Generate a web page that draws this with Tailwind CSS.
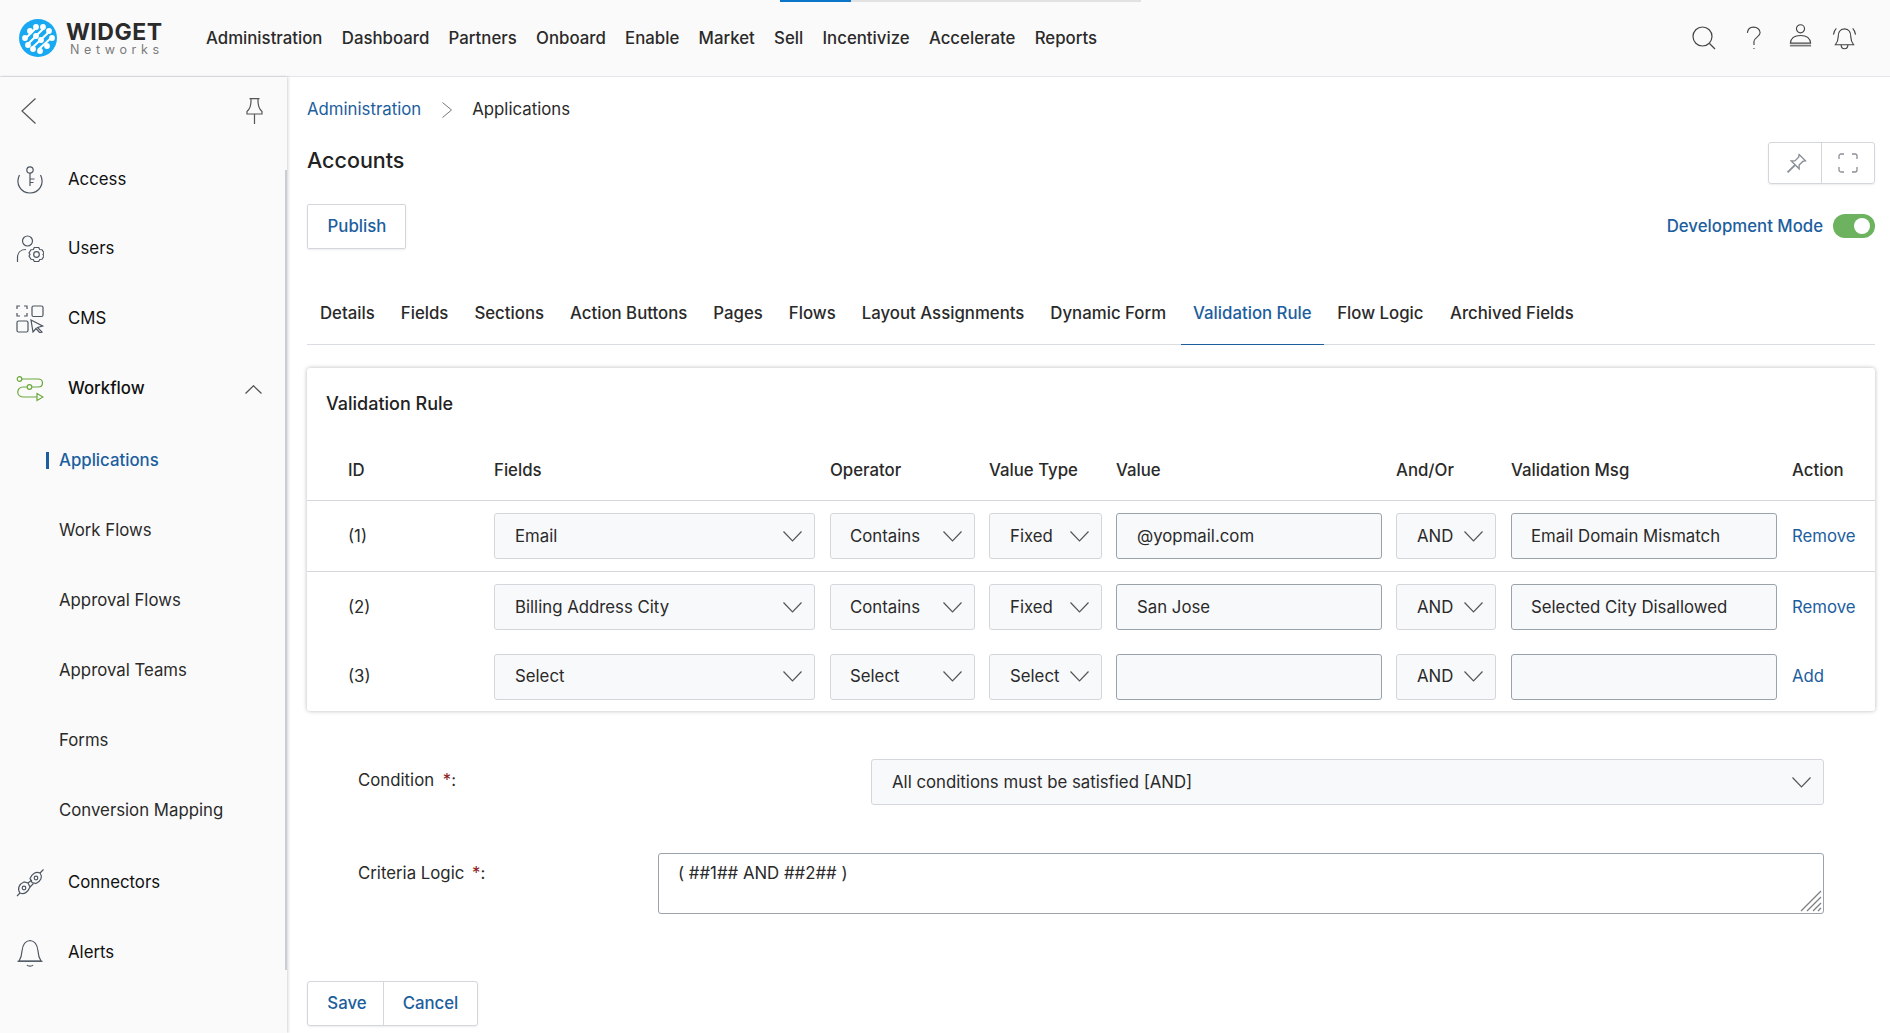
<!DOCTYPE html>
<html lang="en">
<head>
  <meta charset="UTF-8">
  <title>Accounts · Validation Rule</title>
  <script src="https://cdn.jsdelivr.net/npm/@tailwindcss/browser@4"></script>
</head>
<body class="h-[1033px] w-[1890px] overflow-hidden bg-white font-['Inter',sans-serif] text-[16.8px] text-[#2a2a2a]">

  <!-- TOP NAV -->
  <header class="relative flex h-[77px] items-center border-b border-[#e3e6ea] bg-[#fafafa]">
    <div class="absolute left-[780px] top-0 h-[2px] w-[361px] bg-[#e2e2e2]"></div>
    <div class="absolute left-[780px] top-0 h-[2px] w-[71px] bg-[#0b76c9]"></div>

    <svg class="ml-[19px] h-[38px] w-[38px] shrink-0" viewBox="0 0 38 38">
      <circle cx="19" cy="19" r="19" fill="#19a9f2"/>
      <g stroke="#fff" stroke-width="2" fill="#fff" stroke-linecap="round">
        <path d="M7 19 L17 9 M9 25 L24 10 M14 28 L30 13 M20 30 L32 19" fill="none"/>
        <circle cx="17" cy="8" r="1.900"/><circle cx="24" cy="8" r="1.900"/><circle cx="11" cy="12" r="1.900"/>
        <circle cx="30" cy="12" r="1.900"/><circle cx="6" cy="19" r="1.900"/><circle cx="33" cy="19" r="1.900"/>
        <circle cx="9" cy="26" r="1.900"/><circle cx="28" cy="27" r="1.900"/><circle cx="14" cy="30" r="1.900"/><circle cx="21" cy="32" r="1.900"/>
        <circle cx="17" cy="17" r="1.900"/><circle cx="22" cy="21" r="1.900"/>
      </g>
    </svg>
    <div class="ml-[9px] mt-[2px] flex w-[100px] shrink-0 flex-col">
      <div class="h-[21px] text-[23px] font-bold leading-[21px] tracking-[0.5px] text-[#2b2b2b]">WIDGET</div>
      <div class="ml-[4px] h-[14px] whitespace-nowrap text-[12.5px] leading-[14px] tracking-[4.600px] text-[#7b7b7b]">Networks</div>
    </div>

    <nav class="ml-[40px] mt-[2px] flex gap-[19.300px] font-medium text-[#2a2a2a]">
      <a>Administration</a><a>Dashboard</a><a>Partners</a><a>Onboard</a><a>Enable</a><a>Market</a><a>Sell</a><a>Incentivize</a><a>Accelerate</a><a>Reports</a>
    </nav>

    <div class="ml-auto mr-[33px] flex items-center text-[#444]">
      <svg class="h-[24px] w-[24px]" viewBox="0 0 24 24" fill="none" stroke="currentColor" stroke-width="1.200"><circle cx="10.500" cy="10.500" r="9.500"/><path d="M17.500 17.500 L23 23"/></svg>
      <svg class="ml-[29px] h-[25px] w-[17px]" viewBox="0 0 18 26" fill="none" stroke="currentColor" stroke-width="1.200"><path d="M2.500 7 C3 3 6 1 9 1 C13 1 16 3.500 16 7 C16 11 10 12 9.500 16 L9.500 20"/><path d="M9.500 23 V25" stroke-dasharray="1 1"/></svg>
      <svg class="ml-[26px] h-[25px] w-[25px] -translate-y-[3px]" viewBox="0 0 26 26" fill="none" stroke="currentColor" stroke-width="1.200"><circle cx="13" cy="6" r="4.200"/><path d="M2.500 21 C3 15 8 13 13 13 C18 13 23 15 23.500 21 Z"/><path d="M2 23.500 H24" stroke-width="1.800" stroke="#777"/></svg>
      <svg class="ml-[19px] h-[25px] w-[25px]" viewBox="0 0 26 26" fill="none" stroke="currentColor" stroke-width="1.200"><path d="M13 3 C8 3 6.500 7 6.500 11 C6.500 15 5.500 17 3.500 19.500 H22.500 C20.500 17 19.500 15 19.500 11 C19.500 7 18 3 13 3 Z"/><path d="M9.500 19.500 C9.500 25 16.500 25 16.500 19.500"/><path d="M1.500 9 C2 6 3 4 4.500 2.500 M24.500 9 C24 6 23 4 21.500 2.500"/></svg>
    </div>
  </header>

  <div class="flex h-[956px]">
    <!-- SIDEBAR -->
    <aside class="relative w-[287px] shrink-0 bg-[#fafafa] shadow-[1px_0_3px_rgba(0,0,0,0.18)]">
      <div class="absolute right-0 top-[93px] h-[800px] w-[2px] bg-[#c9ced4]"></div>
      <div class="flex h-[68px] items-start justify-between pl-[21px] pr-[24px] pt-[21px]">
        <svg class="h-[26px] w-[15px]" viewBox="0 0 15 26" fill="none" stroke="#555" stroke-width="1.200"><path d="M14.500 .5 L1 13 L14.500 25.500"/></svg>
        <svg class="h-[26px] w-[17px]" viewBox="0 0 17 26" fill="none" stroke="#555" stroke-width="1.200"><path d="M3.500 .6 H13.500 M5 .6 V3 C5 7 4 11 1 13.500 V16 H16 V13.500 C13 11 12 7 12 3 V.6 M8.500 16 V26"/></svg>
      </div>

      <div class="flex h-[69px] items-center pl-[16px]">
        <svg class="h-[28px] w-[28px] shrink-0 text-[#4d5661]" viewBox="0 0 28 28" fill="none" stroke="currentColor" stroke-width="1.200"><circle cx="14" cy="4" r="3.200"/><path d="M14 7 V20 M14 13 H18.500 M14 16.500 H17.500"/><path d="M3.500 9 C-1 18 5 27 14 27 C23 27 29 18 24.500 9"/></svg>
        <span class="ml-[24px] text-[#111]">Access</span>
      </div>
      <div class="flex h-[70px] items-center pl-[16px]">
        <svg class="h-[28px] w-[28px] shrink-0 text-[#4d5661]" viewBox="0 0 28 28" fill="none" stroke="currentColor" stroke-width="1.200"><circle cx="11.500" cy="6" r="5"/><path d="M1.500 27 V22.500 C1.500 17.500 5 14.500 10 14.500"/><circle cx="20.500" cy="19.500" r="2.800"/><path d="M18.300 12.500 H22.700 L23.700 14.500 L26 14.700 L28 18 L27 19.500 L28 21 L26 24.300 L23.700 24.500 L22.700 26.500 H18.300 L17.300 24.500 L15 24.300 L13 21 L14 19.500 L13 18 L15 14.700 L17.300 14.500 Z"/></svg>
        <span class="ml-[24px] text-[#111]">Users</span>
      </div>
      <div class="flex h-[70px] items-center pl-[16px]">
        <svg class="h-[28px] w-[28px] shrink-0 text-[#4d5661]" viewBox="0 0 28 28" fill="none" stroke="currentColor" stroke-width="1.200"><path d="M1 4 V1 H4 M8 1 H11 V4 M11 8 V11 H8 M4 11 H1 V8"/><rect x="16" y="1" width="11" height="10.500" rx="1.500"/><rect x="1" y="16" width="11" height="11" rx="1.500"/><path d="M15 15 L26.500 21 L21.500 22.500 L26 27 L24 28 L20 23.500 L17 27 Z"/></svg>
        <span class="ml-[24px] text-[#111]">CMS</span>
      </div>
      <div class="mb-[2px] flex h-[70px] items-center pl-[16px] pr-[25px]">
        <svg class="h-[28px] w-[28px] shrink-0 text-[#6aa83a]" viewBox="0 0 28 28" fill="none" stroke="currentColor" stroke-width="1.200"><circle cx="3.500" cy="4" r="2.300"/><path d="M6 4 H22 C28 4 28 12 22 12 H16 M11 12 H7 C0 12 0 22 7 22 H21"/><circle cx="13.500" cy="12" r="2.300"/><path d="M21 18.500 L27 22 L21 25.500 Z"/></svg>
        <span class="ml-[24px] font-medium text-[#111]">Workflow</span>
        <svg class="ml-auto h-[9px] w-[17px]" viewBox="0 0 17 9" fill="none" stroke="#555" stroke-width="1.300"><path d="M.5 8.500 L8.500 .8 L16.500 8.500"/></svg>
      </div>

      <div class="relative flex h-[70px] items-center pl-[59px] font-medium text-[#1c5e9e]">
        <span class="absolute left-[46px] top-[26px] h-[17px] w-[3px] bg-[#1c5e9e]"></span>Applications
      </div>
      <div class="flex h-[70px] items-center pl-[59px]">Work Flows</div>
      <div class="flex h-[70px] items-center pl-[59px]">Approval Flows</div>
      <div class="flex h-[70px] items-center pl-[59px]">Approval Teams</div>
      <div class="flex h-[70px] items-center pl-[59px]">Forms</div>
      <div class="flex h-[70px] items-center pl-[59px]">Conversion Mapping</div>

      <div class="mt-[2px] flex h-[70px] items-center pl-[16px]">
        <svg class="h-[28px] w-[28px] shrink-0 text-[#4d5661]" viewBox="0 0 28 28" fill="none" stroke="currentColor" stroke-width="1.200"><path d="M1 27 L4 24 M24 4 L27.500 .5"/><path d="M4 24 C1 20 3 15 8 13 L12 14 L14 18 C12 23 8 26 4 24 Z"/><path d="M24 4 C27 8 25 12 20 14.500 L16 13.500 L14 9.500 C16 5 20 2 24 4 Z"/><circle cx="8" cy="19" r="1.800"/><circle cx="20" cy="9" r="1.800"/><path d="M12 14 L16 11 M14 18 L17.500 14.500"/></svg>
        <span class="ml-[24px] text-[#111]">Connectors</span>
      </div>
      <div class="flex h-[70px] items-center pl-[16px]">
        <svg class="h-[28px] w-[28px] shrink-0 text-[#4d5661]" viewBox="0 0 28 28" fill="none" stroke="currentColor" stroke-width="1.200"><path d="M14 1.500 C8 2 6.500 7 6 12 C5.800 16 5 19 3 22 H25 C23 19 22.200 16 22 12 C21.500 7 20 2 14 1.500 Z"/><path d="M1.500 22.300 H26.500"/><path d="M11 26 C12 27.500 16 27.500 17 26"/></svg>
        <span class="ml-[24px] text-[#111]">Alerts</span>
      </div>
    </aside>

    <!-- MAIN -->
    <main class="relative flex-1 pl-[20px] pr-[15px]">
      <!-- breadcrumb -->
      <div class="flex h-[65px] items-center">
        <a class="text-[#1c5e9e]">Administration</a>
        <svg class="ml-[21px] h-[16px] w-[10px]" viewBox="0 0 10 16" fill="none" stroke="#777" stroke-width="1"><path d="M.5 .5 L9.500 8 L.5 15.500"/></svg>
        <span class="ml-[20px]">Applications</span>
      </div>

      <div class="flex h-[42px] items-center justify-between">
        <h1 class="mb-[5px] text-[21.500px] font-medium text-[#222]">Accounts</h1>
        <div class="flex h-[42px] w-[107px] rounded-[3px] border border-[#d3d7dc] shadow-[0_1px_2px_rgba(0,0,0,0.08)]">
          <div class="flex w-[53px] items-center justify-center border-r border-[#d3d7dc] pl-[3px]">
            <svg class="h-[21px] w-[21px]" viewBox="0 0 20 20" fill="none" stroke="#8a9097" stroke-width="1.300"><path d="M12.500 1.500 L18.500 7.500 L16 8 L12.500 11.500 L12.500 15 L5 7.500 L8.500 7.500 L12 4 Z"/><path d="M8.500 11.500 L1.500 18.500" stroke-width="1.800"/></svg>
          </div>
          <div class="flex flex-1 items-center justify-center">
            <svg class="h-[20px] w-[20px]" viewBox="0 0 20 20" fill="none" stroke="#8a9097" stroke-width="1.300"><path d="M1 6 V3 C1 2 2 1 3 1 H6 M14 1 H17 C18 1 19 2 19 3 V6 M19 14 V17 C19 18 18 19 17 19 H14 M6 19 H3 C2 19 1 18 1 17 V14"/></svg>
          </div>
        </div>
      </div>

      <div class="mt-[20px] flex h-[44px] items-center justify-between">
        <button class="h-[45px] w-[99px] rounded-[2px] border border-[#d3d7dc] pl-[1px] pt-[1px] font-medium text-[#1c5e9e] shadow-[0_1px_2px_rgba(0,0,0,0.08)]">Publish</button>
        <div class="flex items-center">
          <span class="translate-y-px font-medium text-[#1c5e9e]">Development Mode</span>
          <span class="relative ml-[10px] block h-[24px] w-[42px] rounded-full bg-[#6db35f]"><span class="absolute right-[5px] top-[4px] h-[16px] w-[16px] rounded-full bg-white"></span></span>
        </div>
      </div>

      <!-- tabs -->
      <div class="mt-[44px] flex h-[53px] border-b border-[#d9dce0] font-medium">
        <a class="flex items-center px-[13px] pb-[9px]">Details</a>
        <a class="flex items-center px-[13px] pb-[9px]">Fields</a>
        <a class="flex items-center px-[13px] pb-[9px]">Sections</a>
        <a class="flex items-center px-[13px] pb-[9px]">Action Buttons</a>
        <a class="flex items-center px-[13px] pb-[9px]">Pages</a>
        <a class="flex items-center px-[13px] pb-[9px]">Flows</a>
        <a class="flex items-center px-[13px] pb-[9px]">Layout Assignments</a>
        <a class="flex items-center px-[13px] pb-[9px]">Dynamic Form</a>
        <a class="-mb-px ml-[2px] flex items-center border-b border-[#1c5e9e] px-[12px] pb-[9px] text-[#1c5e9e]">Validation Rule</a>
        <a class="flex items-center px-[13.500px] pb-[9px]">Flow Logic</a>
        <a class="flex items-center px-[13px] pb-[9px]">Archived Fields</a>
      </div>

      <!-- card -->
      <section class="mt-[23px] h-[343px] rounded-[3px] bg-white shadow-[0_0_4px_rgba(0,0,0,0.28)]">
        <h2 class="flex h-[72px] items-center pb-[1px] pl-[19px] text-[18px] font-medium text-[#222]">Validation Rule</h2>

        <div class="grid h-[61px] grid-cols-[187px_336px_159px_127px_280px_115px_281px_1fr] items-center border-b border-[#d5d8dd] pt-[2px] font-medium">
          <span class="pl-[41px]">ID</span><span>Fields</span><span>Operator</span><span>Value Type</span><span>Value</span><span>And/Or</span><span>Validation Msg</span><span>Action</span>
        </div>

        <!-- row 1 -->
        <div class="grid h-[71px] grid-cols-[187px_336px_159px_127px_280px_115px_281px_1fr] items-center border-b border-[#d5d8dd] [&_a]:translate-y-px [&_span]:translate-y-px">
          <span class="pl-[41px]">(1)</span>
          <div class="flex h-[46px] w-[321px] items-center justify-between rounded-[3px] border border-[#d3d7dc] bg-[#f8f9fb] pl-[20px] pr-[12px]"><span>Email</span><svg class="h-[11px] w-[19px]" viewBox="0 0 19 11" fill="none" stroke="#555" stroke-width="1.200"><path d="M.5 .5 L9.500 10 L18.500 .5"/></svg></div>
          <div class="flex h-[46px] w-[145px] items-center justify-between rounded-[3px] border border-[#d3d7dc] bg-[#f8f9fb] pl-[19px] pr-[12px]"><span>Contains</span><svg class="h-[11px] w-[19px]" viewBox="0 0 19 11" fill="none" stroke="#555" stroke-width="1.200"><path d="M.5 .5 L9.500 10 L18.500 .5"/></svg></div>
          <div class="flex h-[46px] w-[113px] items-center justify-between rounded-[3px] border border-[#d3d7dc] bg-[#f8f9fb] pl-[20px] pr-[12px]"><span>Fixed</span><svg class="h-[11px] w-[19px]" viewBox="0 0 19 11" fill="none" stroke="#555" stroke-width="1.200"><path d="M.5 .5 L9.500 10 L18.500 .5"/></svg></div>
          <div class="flex h-[46px] w-[266px] items-center rounded-[3px] border border-[#9aa3ab] bg-[#f8f9fb] pl-[20px]"><span>@yopmail.com</span></div>
          <div class="flex h-[46px] w-[100px] items-center justify-between rounded-[3px] border border-[#d3d7dc] bg-[#f8f9fb] pl-[20px] pr-[12px]"><span>AND</span><svg class="h-[11px] w-[19px]" viewBox="0 0 19 11" fill="none" stroke="#555" stroke-width="1.200"><path d="M.5 .5 L9.500 10 L18.500 .5"/></svg></div>
          <div class="flex h-[46px] w-[266px] items-center rounded-[3px] border border-[#9aa3ab] bg-[#f8f9fb] pl-[19px]"><span>Email Domain Mismatch</span></div>
          <a class="text-[#1c5e9e]">Remove</a>
        </div>

        <!-- row 2 -->
        <div class="grid h-[70px] grid-cols-[187px_336px_159px_127px_280px_115px_281px_1fr] items-center [&_a]:translate-y-px [&_span]:translate-y-px">
          <span class="pl-[41px]">(2)</span>
          <div class="flex h-[46px] w-[321px] items-center justify-between rounded-[3px] border border-[#d3d7dc] bg-[#f8f9fb] pl-[20px] pr-[12px]"><span>Billing Address City</span><svg class="h-[11px] w-[19px]" viewBox="0 0 19 11" fill="none" stroke="#555" stroke-width="1.200"><path d="M.5 .5 L9.500 10 L18.500 .5"/></svg></div>
          <div class="flex h-[46px] w-[145px] items-center justify-between rounded-[3px] border border-[#d3d7dc] bg-[#f8f9fb] pl-[19px] pr-[12px]"><span>Contains</span><svg class="h-[11px] w-[19px]" viewBox="0 0 19 11" fill="none" stroke="#555" stroke-width="1.200"><path d="M.5 .5 L9.500 10 L18.500 .5"/></svg></div>
          <div class="flex h-[46px] w-[113px] items-center justify-between rounded-[3px] border border-[#d3d7dc] bg-[#f8f9fb] pl-[20px] pr-[12px]"><span>Fixed</span><svg class="h-[11px] w-[19px]" viewBox="0 0 19 11" fill="none" stroke="#555" stroke-width="1.200"><path d="M.5 .5 L9.500 10 L18.500 .5"/></svg></div>
          <div class="flex h-[46px] w-[266px] items-center rounded-[3px] border border-[#9aa3ab] bg-[#f8f9fb] pl-[20px]"><span>San Jose</span></div>
          <div class="flex h-[46px] w-[100px] items-center justify-between rounded-[3px] border border-[#d3d7dc] bg-[#f8f9fb] pl-[20px] pr-[12px]"><span>AND</span><svg class="h-[11px] w-[19px]" viewBox="0 0 19 11" fill="none" stroke="#555" stroke-width="1.200"><path d="M.5 .5 L9.500 10 L18.500 .5"/></svg></div>
          <div class="flex h-[46px] w-[266px] items-center rounded-[3px] border border-[#9aa3ab] bg-[#f8f9fb] pl-[19px]"><span>Selected City Disallowed</span></div>
          <a class="text-[#1c5e9e]">Remove</a>
        </div>

        <!-- row 3 -->
        <div class="grid h-[69px] grid-cols-[187px_336px_159px_127px_280px_115px_281px_1fr] items-center">
          <span class="pl-[41px]">(3)</span>
          <div class="flex h-[46px] w-[321px] items-center justify-between rounded-[3px] border border-[#d3d7dc] bg-[#f8f9fb] pl-[20px] pr-[12px]">Select<svg class="h-[11px] w-[19px]" viewBox="0 0 19 11" fill="none" stroke="#555" stroke-width="1.200"><path d="M.5 .5 L9.500 10 L18.500 .5"/></svg></div>
          <div class="flex h-[46px] w-[145px] items-center justify-between rounded-[3px] border border-[#d3d7dc] bg-[#f8f9fb] pl-[19px] pr-[12px]">Select<svg class="h-[11px] w-[19px]" viewBox="0 0 19 11" fill="none" stroke="#555" stroke-width="1.200"><path d="M.5 .5 L9.500 10 L18.500 .5"/></svg></div>
          <div class="flex h-[46px] w-[113px] items-center justify-between rounded-[3px] border border-[#d3d7dc] bg-[#f8f9fb] pl-[20px] pr-[12px]">Select<svg class="h-[11px] w-[19px]" viewBox="0 0 19 11" fill="none" stroke="#555" stroke-width="1.200"><path d="M.5 .5 L9.500 10 L18.500 .5"/></svg></div>
          <div class="h-[46px] w-[266px] rounded-[3px] border border-[#9aa3ab] bg-[#f8f9fb]"></div>
          <div class="flex h-[46px] w-[100px] items-center justify-between rounded-[3px] border border-[#d3d7dc] bg-[#f8f9fb] pl-[20px] pr-[12px]">AND<svg class="h-[11px] w-[19px]" viewBox="0 0 19 11" fill="none" stroke="#555" stroke-width="1.200"><path d="M.5 .5 L9.500 10 L18.500 .5"/></svg></div>
          <div class="h-[46px] w-[266px] rounded-[3px] border border-[#9aa3ab] bg-[#f8f9fb]"></div>
          <a class="text-[#1c5e9e]">Add</a>
        </div>
      </section>

      <!-- condition -->
      <div class="mt-[48px] flex h-[46px] pr-[51px]">
        <div class="w-[564px] pl-[51px] pt-[9px]">Condition <span class="ml-[4px] text-[#8b1a1a]">*</span>:</div>
        <div class="flex flex-1 items-center justify-between rounded-[3px] border border-[#d3d7dc] bg-[#f8f9fb] pl-[20px] pr-[12px]"><span class="translate-y-px">All conditions must be satisfied [AND]</span><svg class="h-[11px] w-[19px]" viewBox="0 0 19 11" fill="none" stroke="#555" stroke-width="1.200"><path d="M.5 .5 L9.500 10 L18.500 .5"/></svg></div>
      </div>

      <!-- criteria -->
      <div class="mt-[48px] flex h-[61px] pr-[51px]">
        <div class="w-[351px] pl-[51px] pt-[8px]">Criteria Logic <span class="ml-[3px] text-[#8b1a1a]">*</span>:</div>
        <div class="relative flex-1 rounded-[3px] border border-[#9aa3ab] pl-[19px] pt-[7px]">
          ( ##1## AND ##2## )
          <svg class="absolute bottom-[1px] right-[1px] h-[22px] w-[22px]" viewBox="0 0 22 22" fill="none" stroke="#808080" stroke-width="1.300"><path d="M1 21 L21 1 M7 21 L21 7 M13 21 L21 13 M18 21 L21 18"/></svg>
        </div>
      </div>

      <!-- actions -->
      <div class="mt-[67px] flex h-[45px] w-[171px] rounded-[3px] border border-[#d3d7dc] font-medium text-[#1c5e9e] shadow-[0_1px_2px_rgba(0,0,0,0.08)]">
        <button class="w-[76px] border-r border-[#d3d7dc] pl-[3px]">Save</button>
        <button class="flex-1">Cancel</button>
      </div>
    </main>
  </div>
</body>
</html>
